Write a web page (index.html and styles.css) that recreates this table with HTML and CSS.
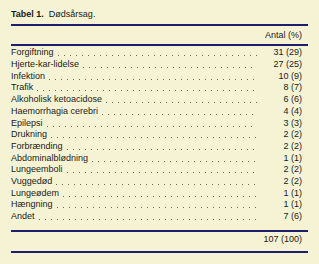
FILE: index.html
```
<!DOCTYPE html>
<html lang="da">
<head>
<meta charset="utf-8">
<link rel="stylesheet" href="styles.css">
</head>
<body>
<div class="table">
  <div class="title"><b>Tabel 1.</b>&nbsp; Dødsårsag.</div>
  <div class="head"><span class="num">Antal (%)</span></div>
  <div class="rows">
    <div class="row"><span class="lbl">Forgiftning</span><span class="dots"></span><span class="num">31 (29)</span></div>
    <div class="row"><span class="lbl">Hjerte-kar-lidelse</span><span class="dots"></span><span class="num">27 (25)</span></div>
    <div class="row"><span class="lbl">Infektion</span><span class="dots"></span><span class="num">10 (9)</span></div>
    <div class="row"><span class="lbl">Trafik</span><span class="dots"></span><span class="num">8 (7)</span></div>
    <div class="row"><span class="lbl">Alkoholisk ketoacidose</span><span class="dots"></span><span class="num">6 (6)</span></div>
    <div class="row"><span class="lbl">Haemorrhagia cerebri</span><span class="dots"></span><span class="num">4 (4)</span></div>
    <div class="row"><span class="lbl">Epilepsi</span><span class="dots"></span><span class="num">3 (3)</span></div>
    <div class="row"><span class="lbl">Drukning</span><span class="dots"></span><span class="num">2 (2)</span></div>
    <div class="row"><span class="lbl">Forbrænding</span><span class="dots"></span><span class="num">2 (2)</span></div>
    <div class="row"><span class="lbl">Abdominalblødning</span><span class="dots"></span><span class="num">1 (1)</span></div>
    <div class="row"><span class="lbl">Lungeemboli</span><span class="dots"></span><span class="num">2 (2)</span></div>
    <div class="row"><span class="lbl">Vuggedød</span><span class="dots"></span><span class="num">2 (2)</span></div>
    <div class="row"><span class="lbl">Lungeødem</span><span class="dots"></span><span class="num">1 (1)</span></div>
    <div class="row"><span class="lbl">Hængning</span><span class="dots"></span><span class="num">1 (1)</span></div>
    <div class="row"><span class="lbl">Andet</span><span class="dots"></span><span class="num">7 (6)</span></div>
  </div>
  <div class="total"><span class="num">107 (100)</span></div>
</div>
</body>
</html>
```
FILE: styles.css
```
html, body {
  margin: 0;
  padding: 0;
  background: #f6f3d4;
}
body {
  width: 319px;
  height: 264px;
  overflow: hidden;
  font-family: "Liberation Sans", Arial, sans-serif;
  font-size: 9px;
  color: #1a1a1a;
}
.table {
  margin-left: 11px;
  width: 297px;
  padding-top: 8px;
}
.title {
  line-height: 12px;
  height: 12px;
  padding-bottom: 4px;
  border-bottom: 2px solid #1e1e6e;
}
.title b {
  font-weight: bold;
}
.head {
  display: flex;
  justify-content: flex-end;
  line-height: 12px;
  padding: 3px 6px 3px 0;
  border-bottom: 2px solid #1e1e6e;
}
.rows {
  padding-top: 1.4px;
  padding-bottom: 7px;
  border-bottom: 2px solid #1e1e6e;
}
.row {
  display: flex;
  align-items: stretch;
  height: 11.7px;
  line-height: 11.7px;
  padding-right: 6px;
}
.lbl {
  white-space: nowrap;
}
.dots {
  flex: 1;
  margin-left: 4px;
  background-image: linear-gradient(to right, #6a6a60 1px, transparent 1px);
  background-size: 6px 1px;
  background-repeat: repeat-x;
  background-position: 0 8px;
}
.row .num {
  width: 45px;
  text-align: right;
  white-space: nowrap;
}
.total {
  display: flex;
  justify-content: flex-end;
  line-height: 12px;
  padding: 1px 6px 6px 0;
  border-bottom: 2px solid #1e1e6e;
}
```
